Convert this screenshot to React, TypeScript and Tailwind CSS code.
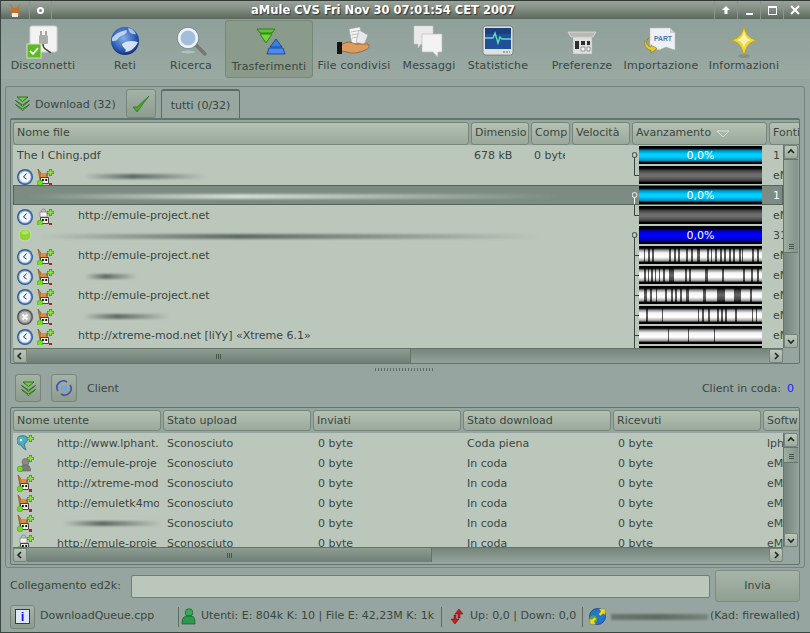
import React from 'react';

const font = { fontFamily: '"DejaVu Sans", sans-serif' };

const Clock = ({ off }: { off?: boolean }) => (
    <svg width="16" height="16" viewBox="0 0 16 16" className="shrink-0 mt-[2px]">
        <circle cx="8" cy="8" r="8" fill={off ? '#555' : '#2f5f9c'} />
        <circle cx="8" cy="8" r="6.6" fill={off ? '#8f8f8f' : '#8fb0d8'} />
        <circle cx="8" cy="8" r="5.6" fill={off ? '#bdbdbd' : '#f1f4f9'} />
        {off
            ? <path d="M5.5 5.5l5 5M10.5 5.5l-5 5" stroke="#f8f8f8" strokeWidth="2.2" />
            : <path d="M9.5 4.5L6.5 8l3 2" stroke="#2b3850" strokeWidth="1" fill="none" />}
    </svg>
);

const Badges = () => (
    <>
        <circle cx="3" cy="15" r="2.8" fill="#6fe01f" stroke="#3d8a10" strokeWidth="0.5" />
        <path d="M12 15h3v3h-3z" fill="#d0101a" />
        <path d="M13.5 1v7M10 4.5h7" stroke="#2f7d10" strokeWidth="3" />
        <path d="M13.5 1.5v6M10.5 4.5h6" stroke="#88e634" strokeWidth="1.8" />
    </>
);

const Mule = ({ lock }: { lock?: boolean }) => (
    <svg width="18" height="18" viewBox="0 0 18 18" className="shrink-0">
        {lock
            ? <>
                <path d="M3 4h7v5H3z" fill="#f0f0f0" stroke="#7a7a7a" strokeWidth="0.7" />
                <path d="M4.5 4V2.500c0-2 4-2 4 0V4" stroke="#8a8a8a" fill="none" />
            </>
            : <>
                <path d="M1 1l3 4 1 3h4l1-3 1-2-1 9H3z" fill="#c9782f" stroke="#7a4414" strokeWidth="0.6" />
                <path d="M4 5h5v4H4z" fill="#d98f48" />
            </>}
        <path d="M3.500 9.500h8v6h-8z" fill="#ece9df" stroke="#3a3a34" strokeWidth="0.9" />
        <path d="M5 12h1.800M8.300 12h1.800" stroke="#111" strokeWidth="2" />
        <Badges />
    </svg>
);

const Lphant = () => (
    <svg width="18" height="18" viewBox="0 0 18 18" className="shrink-0">
        <path d="M0 5c1-4 7-4 10-2 1 3 0 6-3 7l2 6-3-2-2-3C1 11-1 9 0 5z" fill="#4ab0c0" stroke="#15505e" strokeWidth="0.6" />
        <circle cx="4" cy="6" r="1.300" fill="#fff" />
        <path d="M13.500 1v7M10 4.500h7" stroke="#2f7d10" strokeWidth="3" />
        <path d="M13.500 1.500v6M10.500 4.500h6" stroke="#88e634" strokeWidth="1.800" />
    </svg>
);

const Guest = () => (
    <svg width="18" height="18" viewBox="0 0 18 18" className="shrink-0">
        <circle cx="8.500" cy="8" r="3.500" fill="#8a8a86" stroke="#555" strokeWidth="0.5" />
        <path d="M3 17c0-5 2-6 5.500-6s5 1 5 6z" fill="#7a7a76" stroke="#555" strokeWidth="0.5" />
        <circle cx="3" cy="15" r="2.800" fill="#6fe01f" stroke="#3d8a10" strokeWidth="0.5" />
        <path d="M13.500 1v7M10 4.500h7" stroke="#2f7d10" strokeWidth="3" />
        <path d="M13.500 1.500v6M10.500 4.500h6" stroke="#88e634" strokeWidth="1.800" />
    </svg>
);

const GreenDown = ({ size = 17 }: { size?: number }) => (
    <svg width={size} height={size} viewBox="0 0 17 17" className="shrink-0">
        <path d="M3 2h11l-5.500 4.500z" fill="#6bd13a" stroke="#1f6d12" strokeWidth="0.9" strokeLinejoin="round" />
        <path d="M1.500 5.500l7 4.500 7-4.500-7 6z" fill="#7fe04a" stroke="#1f6d12" strokeWidth="0.9" strokeLinejoin="round" />
        <path d="M1.500 9.500l7 4.500 7-4.500-7 6z" fill="#9be86a" stroke="#1f6d12" strokeWidth="0.9" strokeLinejoin="round" />
    </svg>
);

const DisconnectIcon = () => (
    <svg width="36" height="36" viewBox="3 0 36 36">
        <rect x="8" y="3" width="27" height="26" rx="2" fill="#f3f3f3" stroke="#cfcfcf" />
        <rect x="17" y="12" width="9" height="9" rx="1.500" fill="#a9aeab" />
        <path d="M19 8v4M24 8v4" stroke="#8a8a8a" strokeWidth="1.500" />
        <path d="M21 21c0 5 3 5 8 9" stroke="#444" strokeWidth="1.600" fill="none" />
        <rect x="5" y="21" width="14" height="14" fill="#5cbb22" stroke="#cfe3b8" />
        <path d="M8 28l3 3 5-6" stroke="#fff" strokeWidth="1.800" fill="none" />
    </svg>
);

const GlobeIcon = () => (
    <svg width="36" height="36" viewBox="0 0 36 36">
        <defs>
            <radialGradient id="globeFill" cx="45%" cy="40%" r="60%">
                <stop offset="0%" stopColor="#86aee8" />
                <stop offset="70%" stopColor="#2d5fb8" />
                <stop offset="100%" stopColor="#123070" />
            </radialGradient>
        </defs>
        <circle cx="18" cy="18" r="14" fill="url(#globeFill)" />
        <path d="M5 15c5-6 9-6 14-8 3 2-2 5-5 6s-3 6-9 5z" fill="#c9daf2" opacity="0.9" />
        <path d="M15 21c6-4 11-3 16-2-3 7-9 10-13 10 3-3-3-4-3-8z" fill="#e6eef9" opacity="0.9" />
        <path d="M21 5c3 0 6 2 8 6-4 1-7-1-8-6z" fill="#a8c4ec" />
    </svg>
);

const SearchIcon = () => (
    <svg width="36" height="36" viewBox="0 0 36 36">
        <ellipse cx="15" cy="29" rx="7" ry="1.500" fill="#c9d3cf" opacity="0.6" />
        <path d="M23 22l9 9" stroke="#77776f" strokeWidth="3.500" strokeLinecap="round" />
        <circle cx="15" cy="15" r="9" fill="#a3bedb" stroke="#eef2f5" strokeWidth="3" />
        <circle cx="15" cy="15" r="10.700" fill="none" stroke="#5b7690" strokeWidth="0.600" />
    </svg>
);

const TransferIcon = () => (
    <svg width="36" height="36" viewBox="0 0 36 36">
        <path d="M6 4h18l-3 4H9z" fill="#5cc72d" stroke="#1e6f12" strokeWidth="0.800" />
        <path d="M9 9h12l-6 9z" fill="#73d63f" stroke="#1e6f12" strokeWidth="0.800" />
        <path d="M25 14l-6 8h12z" fill="#3a7fe6" stroke="#123a8a" strokeWidth="0.800" />
        <path d="M18 23h14l2 6H16z" fill="#4a8bf0" stroke="#123a8a" strokeWidth="0.800" />
    </svg>
);

const ShareIcon = () => (
    <svg width="36" height="36" viewBox="0 0 36 36">
        <path d="M13 6l11-2 3 15-11 2z" fill="#f4f4f4" stroke="#999" strokeWidth="0.500" />
        <path d="M15 9l8-1.500M15.500 12l8-1.500M16 15l8-1.500" stroke="#a5a5a5" strokeWidth="0.700" />
        <path d="M23 7l9 5-4 10-8-3z" fill="#e8e8e8" stroke="#999" strokeWidth="0.500" />
        <path d="M5 22c6-4 10-3 14-1l13 0c2 2 1 5-3 6-6 3-13 4-18 2l-6-1z" fill="#dd9c5e" stroke="#8a5526" strokeWidth="0.700" />
        <rect x="1" y="19" width="5" height="12" fill="#141414" />
    </svg>
);

const MessageIcon = () => (
    <svg width="36" height="36" viewBox="0 0 36 36">
        <path d="M3 3h19v18H10l-3 4v-4H3z" fill="#e9e9e9" stroke="#c8c8c8" strokeWidth="0.500" />
        <path d="M11 11h20v18h-4l-0.500 5-4.500-5H11z" fill="#f3f3f3" stroke="#bcbcbc" strokeWidth="0.700" />
    </svg>
);

const StatsIcon = () => (
    <svg width="36" height="36" viewBox="0 0 36 36">
        <rect x="3" y="3" width="30" height="29" rx="3" fill="#dfe1df" stroke="#6a6f6c" strokeWidth="0.700" />
        <rect x="5" y="5" width="26" height="21" fill="#214f99" />
        <rect x="5" y="5" width="26" height="6" fill="#1b3f7c" />
        <path d="M5 15h8l2-5 3 10 2-6 2 2h9" stroke="#62e0b4" strokeWidth="1.400" fill="none" />
        <path d="M23 29h7" stroke="#8d8d8d" strokeWidth="1.500" strokeDasharray="2 1" />
    </svg>
);

const PrefsIcon = () => (
    <svg width="36" height="36" viewBox="0 0 36 36">
        <path d="M4 9h28l-3 5H7z" fill="#b6bab5" stroke="#eee" strokeWidth="0.600" />
        <rect x="9" y="14" width="19" height="17" fill="#dfdfdd" stroke="#aaa" strokeWidth="0.500" />
        <path d="M11 18h4v8h-4zM17 18h4v4h-4zM23 18h3v4h-3z" fill="#2e2e2e" />
        <path d="M17 24h4v4h-4zM23 24h3v4h-3z" fill="#f6f6f6" stroke="#444" strokeWidth="0.500" />
    </svg>
);

const ImportIcon = () => (
    <svg width="36" height="36" viewBox="0 0 36 36">
        <path d="M7 5h20l5 5v17l-9-3-7 3-9-3z" fill="#eef0f3" stroke="#b8b8b8" strokeWidth="0.500" />
        <path d="M27 5v5h5z" fill="#c9ccd0" />
        <text x="11" y="18" fontSize="8" fontWeight="700" fill="#4a78ae" textLength="18" lengthAdjust="spacingAndGlyphs" style={{ fontFamily: '"Liberation Sans", sans-serif' }}>PART</text>
        <path d="M6 15c-4 3-3 8 2 9v-2l6 3.500L8 30v-2.500C1 26-1 18 6 15z" fill="#e6c92e" stroke="#8a7410" strokeWidth="0.600" />
    </svg>
);

const StarIcon = () => (
    <svg width="36" height="36" viewBox="0 0 36 36">
        <ellipse cx="18" cy="33" rx="6" ry="2" fill="#6f7d77" opacity="0.500" />
        <path d="M18 3c2 9 5 13 14 14-9 2-12 6-14 16-2-10-5-14-14-16 9-1 12-5 14-14z" fill="#efd63c" stroke="#b59b12" strokeWidth="0.700" />
        <path d="M18 8c1 5 3 8 7 9-4 1-6 3-7 8-1-5-3-7-7-8 4-1 6-4 7-9z" fill="#fbf2a8" />
    </svg>
);

const tools = [
    { label: 'Disconnetti', icon: <DisconnectIcon />, box: 'w-[78px] ml-[3px]' },
    { label: 'Reti', icon: <GlobeIcon />, box: 'w-[86px]' },
    { label: 'Ricerca', icon: <SearchIcon />, box: 'w-[46px]' },
    { label: 'Trasferimenti', icon: <TransferIcon />, box: 'w-[88px] ml-[11px]', active: true },
    { label: 'File condivisi', icon: <ShareIcon />, box: 'w-[82px]' },
    { label: 'Messaggi', icon: <MessageIcon />, box: 'w-[68px]' },
    { label: 'Statistiche', icon: <StatsIcon />, box: 'w-[70px]' },
    { label: 'Preferenze', icon: <PrefsIcon />, box: 'w-[74px] ml-[12px]' },
    { label: 'Importazione', icon: <ImportIcon />, box: 'w-[76px] ml-[4px]' },
    { label: 'Informazioni', icon: <StarIcon />, box: 'w-[82px] ml-[4px]' },
];

const TitleBar = () => (
    <div className="h-[19px] shrink-0 flex items-center border-t border-[#2f3a34] bg-linear-to-b from-[#9ba39a] via-[#7f8b81] to-[#5a675d] text-white">
        <div className="w-[28px] flex justify-center">
            <svg width="14" height="15" viewBox="0 0 14 15">
                <path d="M2 0l3 5h4l3-5-2 8 2 5H2l2-5z" fill="#c4702a" />
                <path d="M4 10h6v4H4z" fill="#eee" />
            </svg>
        </div>
        <div className="w-[23px] h-full flex items-center justify-center border-x border-[#8a958b]">
            <span className="w-[7px] h-[7px] rounded-full border-2 border-white" />
        </div>
        <div className="flex-1 pt-[2px] text-center font-bold text-[11.5px] [text-shadow:1px_1px_1px_#333]">
            aMule CVS Fri Nov 30 07:01:54 CET 2007
        </div>
        <div className="flex h-full items-center mr-[4px]">
            <div className="w-[23px] h-full flex items-center justify-center border-l border-[#8a958b]">
                <svg width="10" height="10" viewBox="0 0 10 10"><path d="M5 1l4 4H6.500v4h-3V5H1z" fill="#fff" /></svg>
            </div>
            <div className="w-[23px] h-full flex items-end justify-center pb-[4px] border-l border-[#8a958b]">
                <span className="w-[7px] h-[2px] bg-white" />
            </div>
            <div className="w-[23px] h-full flex items-center justify-center border-l border-[#8a958b]">
                <span className="w-[9px] h-[9px] border border-white border-t-2" />
            </div>
            <div className="w-[23px] h-full flex items-center justify-center border-l border-[#8a958b]">
                <svg width="10" height="10" viewBox="0 0 10 10"><path d="M1 1l8 8M9 1l-8 8" stroke="#fff" strokeWidth="2" /></svg>
            </div>
        </div>
    </div>
);

const Toolbar = () => (
    <div className="h-[60px] shrink-0 flex bg-linear-to-b from-[#8f9f99] to-[#9aaaa3]">
        {tools.map(t => (
            <div
                key={t.label}
                className={`${t.box} flex flex-col items-center pt-[4px] whitespace-nowrap ${t.active ? 'bg-[#8a9b8c] border border-[#76877b] rounded-[3px] my-[1px] pt-[4px]' : ''}`}
            >
                <div className="h-[36px] flex items-center justify-center">{t.icon}</div>
                <span className={`${t.active ? '-mt-[2px]' : '-mt-[1px]'} text-[11px] tracking-[0.2px] text-[#3a4640]`}>{t.label}</span>
            </div>
        ))}
    </div>
);

// dark stripes of the chunk bars, in bar pixels: [start, width]
const stripes: [number, number][][] = [
    [[5, 1], [9, 2], [13, 2], [30, 2], [35, 2], [39, 2], [47, 2], [52, 2], [58, 3], [68, 2], [72, 1], [76, 2], [81, 2], [85, 2], [90, 2], [94, 2], [100, 2], [103, 1], [113, 2], [118, 2]],
    [[5, 2], [9, 1], [12, 2], [16, 1], [20, 1], [24, 2], [30, 2], [32, 3], [46, 2], [50, 2], [66, 3], [83, 2], [104, 2], [112, 2], [118, 2]],
    [[5, 3], [11, 2], [17, 1], [26, 2], [32, 2], [36, 2], [41, 2], [47, 3], [64, 3], [78, 8], [95, 7], [111, 2]],
    [[7, 2], [23, 1], [59, 1], [63, 2], [69, 2], [78, 2], [82, 2], [86, 2], [96, 2], [113, 1], [117, 1]],
    [[29, 1], [49, 1], [75, 1]],
];

const ProgressBar = ({ kind, stripe }: { kind: 'cyan' | 'blue' | 'gray' | 'chunks'; stripe?: number }) => {
    if (kind === 'chunks') {
        const marks = stripes[stripe ?? 0];
        return (
            <div className="relative w-[123px] h-[18px] shrink-0 bg-[linear-gradient(#000_12%,#999_24%,#f4f4f4_38%,#fff_62%,#aaa_80%,#000_92%)] overflow-hidden">
                {marks.map(([left, width]) => (
                    <span
                        key={left}
                        className="absolute inset-y-0 bg-[linear-gradient(#000_12%,#444_30%,#666_50%,#444_75%,#000_92%)]"
                        style={{ left, width }}
                    />
                ))}
            </div>
        );
    }
    const fill = kind === 'cyan'
        ? 'bg-[linear-gradient(#000_12%,#0090c0_26%,#00d0ff_45%,#00d0ff_60%,#0090c0_80%,#000_92%)]'
        : kind === 'blue'
            ? 'bg-[linear-gradient(#000_12%,#0000a8_26%,#0000ff_45%,#0000ff_60%,#0000a8_80%,#000_92%)]'
            : 'bg-[linear-gradient(#000_12%,#444_26%,#6c6c6c_45%,#6c6c6c_60%,#444_80%,#000_92%)]';
    return (
        <div className={`w-[123px] h-[18px] pt-[2px] shrink-0 flex items-center justify-center ${fill} text-[11px] text-white`}>
            {kind !== 'gray' && '0,0%'}
        </div>
    );
};

const TreeMark = ({ type, light }: { type: 'root' | 'open' | 'mid' | 'child'; light?: boolean }) => {
    const c = light ? '#f2f2f2' : '#39443f';
    return (
        <svg width="7" height="20" viewBox="0 0 7 20" className="shrink-0">
            {(type === 'root' || type === 'open') && <path d="M2.500 10v10" stroke={c} fill="none" />}
            {(type === 'root' || type === 'open') && <circle cx="2.500" cy="10" r="2.500" fill={light ? '#7c8c82' : '#bcc7bc'} stroke={c} />}
            {type === 'child' && <path d="M2.500 0v10.500h4.500" stroke={c} fill="none" />}
            {type === 'mid' && <path d="M2.500 0v20M2.500 10.500h4.500" stroke={c} fill="none" />}
        </svg>
    );
};

const Smear = ({ className, light }: { className: string; light?: boolean }) => (
    <div
        className={`${className} h-[5px] blur-[1.2px] rounded-full bg-linear-to-r from-transparent from-2% ${light ? 'via-[#d5dcd5]' : 'via-[#5e6b64]'} via-40% to-transparent to-98%`}
    />
);

const ScrollBtn = ({ dir }: { dir: 'up' | 'down' | 'left' | 'right' }) => {
    const d = { up: 'M2 6l3-3 3 3', down: 'M2 4l3 3 3-3', left: 'M6 2L3 5l3 3', right: 'M4 2l3 3-3 3' }[dir];
    return (
        <div className="w-[14px] h-[14px] shrink-0 flex items-center justify-center bg-linear-to-b from-[#bcc7bb] to-[#9eac9f] border border-[#75857b] rounded-[2px]">
            <svg width="10" height="10" viewBox="0 0 10 10"><path d={d} stroke="#222" strokeWidth="1.600" fill="none" /></svg>
        </div>
    );
};

const HScroll = ({ thumb }: { thumb: string }) => (
    <div className="h-[15px] shrink-0 w-[770px] flex bg-linear-to-b from-[#76867c] to-[#93a29a] border-t border-[#64746a] items-center">
        <ScrollBtn dir="left" />
        <div className={`${thumb} h-full flex items-center justify-center gap-[1px] bg-linear-to-b from-[#8d9d92] to-[#6f7f75] border-r border-[#64746a]`}>
            <span className="w-[1px] h-[5px] bg-[#46544c]" />
            <span className="w-[1px] h-[5px] bg-[#46544c]" />
            <span className="w-[1px] h-[5px] bg-[#46544c]" />
        </div>
        <div className="flex-1" />
        <ScrollBtn dir="right" />
    </div>
);

const VScroll = ({ thumb }: { thumb: string }) => (
    <div className="w-[15px] shrink-0 flex flex-col bg-linear-to-r from-[#76867c] to-[#93a29a] border-l border-[#64746a]">
        <ScrollBtn dir="up" />
        <div className={`${thumb} shrink-0 flex flex-col items-center justify-end gap-[1px] pb-[3px] bg-linear-to-r from-[#9fada2] to-[#84948a] border-y border-[#64746a]`}>
            <span className="w-[5px] h-[1px] bg-[#46544c]" />
            <span className="w-[5px] h-[1px] bg-[#46544c]" />
            <span className="w-[5px] h-[1px] bg-[#46544c]" />
        </div>
        <div className="flex-1" />
        <ScrollBtn dir="down" />
    </div>
);

const Head = ({ w, children, sort, low }: { w: string; children: React.ReactNode; sort?: boolean; low?: boolean }) => (
    <div className={`${w} ${low ? 'pt-[2px]' : ''} shrink-0 h-full px-[3px] flex items-center gap-[5px] overflow-hidden whitespace-nowrap rounded-[3px] border border-[#76867b] bg-linear-to-b from-[#b5c1b2] to-[#9aa99c] text-[11px] text-[#3a4640]`}>
        {children}
        {sort && <svg width="14" height="8" viewBox="0 0 14 8"><path d="M1 1h12L7 7z" fill="none" stroke="#d7ddd6" /></svg>}
    </div>
);

type DlRow = {
    icon?: 'clock' | 'dot' | 'off';
    lock?: boolean;
    text?: string;
    smear?: string;
    light?: boolean;
    bar: React.ReactNode;
    tree: 'root' | 'child' | 'open' | 'mid';
    src: string;
    selected?: boolean;
    first?: boolean;
};

const downloads: DlRow[] = [
    { first: true, text: 'The I Ching.pdf', bar: <ProgressBar kind="cyan" />, tree: 'root', src: '1' },
    { icon: 'clock', smear: 'ml-[26px] w-[128px]', bar: <ProgressBar kind="gray" />, tree: 'child', src: 'eM' },
    { smear: 'ml-[-2px] w-[556px]', light: true, selected: true, bar: <ProgressBar kind="cyan" />, tree: 'root', src: '1' },
    { icon: 'clock', lock: true, text: 'http://emule-project.net', bar: <ProgressBar kind="gray" />, tree: 'child', src: 'eM' },
    { icon: 'dot', smear: 'ml-[-3px] w-[520px]', bar: <ProgressBar kind="blue" />, tree: 'open', src: '31' },
    { icon: 'clock', text: 'http://emule-project.net', bar: <ProgressBar kind="chunks" stripe={0} />, tree: 'mid', src: 'eM' },
    { icon: 'clock', smear: 'ml-[29px] w-[54px]', bar: <ProgressBar kind="chunks" stripe={1} />, tree: 'mid', src: 'eM' },
    { icon: 'clock', text: 'http://emule-project.net', bar: <ProgressBar kind="chunks" stripe={2} />, tree: 'mid', src: 'eM' },
    { icon: 'off', smear: 'ml-[26px] w-[90px]', bar: <ProgressBar kind="chunks" stripe={3} />, tree: 'mid', src: 'eM' },
    { icon: 'clock', text: 'http://xtreme-mod.net [liYy] «Xtreme 6.1»', bar: <ProgressBar kind="chunks" stripe={4} />, tree: 'mid', src: 'eM' },
    { bar: <ProgressBar kind="gray" />, tree: 'mid', src: '' },
];

const DownloadRow = ({ row }: { row: DlRow }) => (
    <div className={`h-[20px] shrink-0 flex items-center whitespace-nowrap text-[11px] ${row.selected ? 'bg-[#7c8c82] outline outline-[#56645b] -outline-offset-1 text-white' : 'text-[#3a4640]'}`}>
        <div className="w-[619px] shrink-0 flex items-center pl-[4px] pt-[2px] overflow-hidden h-full">
            {row.first ? (
                <>
                    <span className="w-[457px] shrink-0">{row.text}</span>
                    <span className="w-[60px] shrink-0">678 kB</span>
                    <span className="w-[31px] shrink-0 overflow-hidden">0 byte</span>
                </>
            ) : (
                <>
                    {row.icon === 'dot' ? (
                        <svg width="16" height="16" viewBox="0 0 16 16" className="shrink-0 -mt-[2px]">
                            <circle cx="8" cy="8" r="6" fill="#8ed52c" stroke="#c9d9b8" strokeWidth="1" />
                            <ellipse cx="8" cy="5.500" rx="3.500" ry="2" fill="#c4ee7e" opacity="0.6" />
                        </svg>
                    ) : row.icon ? <Clock off={row.icon === 'off'} /> : null}
                    {row.icon && row.icon !== 'dot' && <div className="ml-[4px] mt-[2px]"><Mule lock={row.lock} /></div>}
                    {row.text && <span className="ml-[23px]">{row.text}</span>}
                    {row.smear && <Smear className={row.smear} light={row.light} />}
                </>
            )}
        </div>
        <div className="w-[137px] shrink-0 h-full flex items-center">
            <div className="flex items-center"><TreeMark type={row.tree} light={row.selected} />{row.bar}</div>
        </div>
        <div className="w-[14px] shrink-0 pl-[4px] pt-[2px] overflow-hidden">{row.src}</div>
    </div>
);

const clients = [
    { icon: <Lphant />, name: 'http://www.lphant.', down: 'Coda piena', soft: 'lphant' },
    { icon: <Guest />, name: 'http://emule-proje', down: 'In coda', soft: 'eMule' },
    { icon: <Mule />, name: 'http://xtreme-mod', down: 'In coda', soft: 'eMule' },
    { icon: <Mule />, name: 'http://emuletk4mod', down: 'In coda', soft: 'eMule' },
    { icon: <Mule />, name: '', down: 'In coda', soft: 'eMule' },
    { icon: <Mule lock />, name: 'http://emule-proje', down: 'In coda', soft: 'eMule' },
];

const SquareBtn = ({ className, children }: { className: string; children: React.ReactNode }) => (
    <div className={`${className} shrink-0 flex items-center justify-center rounded-[3px] border border-[#76867b] bg-linear-to-b from-[#a5b3a6] to-[#8c9c8f]`}>
        {children}
    </div>
);

const Divider = () => <div className="w-[1px] h-[20px] bg-[#5d6b63] shrink-0" />;

export default function App() {
    return (
        <div style={font} className="w-[810px] h-[633px] overflow-hidden flex flex-col bg-[#96a59f] border-l border-b border-[#3a4640]">
            <TitleBar />
            <Toolbar />

            <div className="mt-[7px] ml-[4px] w-[800px] h-[482px] shrink-0 border border-[#75857b] rounded-[3px] px-[4px] pt-[2px] flex flex-col">
                <div className="h-[29px] shrink-0 flex items-center">
                    <div className="ml-[4px] w-[112px] flex items-center gap-[4px] text-[11px] text-[#3a4640]">
                        <GreenDown />
                        <span className="pt-[3px]">Download (32)</span>
                    </div>
                    <SquareBtn className="w-[30px] h-[29px]">
                        <svg width="20" height="20" viewBox="0 0 20 20"><path d="M2 13l4 5L18 2 6 13z" fill="#3fae22" stroke="#17590f" strokeWidth="0.500" /></svg>
                    </SquareBtn>
                    <div className="ml-[5px] w-[79px] h-[30px] pt-[3px] flex items-center justify-center border border-b-0 border-t-2 border-[#5d6b63] rounded-t-[3px] bg-[#98a79f] text-[11px] text-[#3a4640]">
                        tutti (0/32)
                    </div>
                </div>

                <div className="w-[790px] h-[246px] shrink-0 border border-t-2 border-[#64746a] rounded-[2px] pl-[2px] pt-[2px] flex flex-col bg-[#96a59f]">
                    <div className="h-[23px] shrink-0 flex gap-[2px] overflow-hidden">
                        <Head w="w-[456px]">Nome file</Head>
                        <Head w="w-[58px]">Dimensio</Head>
                        <Head w="w-[39px]">Comp</Head>
                        <Head w="w-[58px]">Velocità</Head>
                        <Head w="w-[135px]" sort>Avanzamento</Head>
                        <Head w="w-[40px]">Fonti</Head>
                    </div>
                    <div className="h-[203px] shrink-0 flex bg-[#bcc7bc] w-[785px]">
                        <div className="w-[770px] overflow-hidden flex flex-col">
                            {downloads.map((r, i) => <DownloadRow key={i} row={r} />)}
                        </div>
                        <VScroll thumb="h-[94px]" />
                    </div>
                    <HScroll thumb="w-[384px]" />
                </div>

                <div className="h-[10px] shrink-0 flex items-center justify-center">
                    <div className="w-[60px] h-[3px] bg-[repeating-linear-gradient(90deg,#5d6b63_0_1px,transparent_1px_3px)]" />
                </div>

                <div className="h-[28px] shrink-0 flex items-center pl-[5px] text-[11px] text-[#3a4640]">
                    <SquareBtn className="w-[26px] h-[28px]"><GreenDown /></SquareBtn>
                    <SquareBtn className="w-[26px] h-[28px] ml-[10px]">
                        <svg width="18" height="18" viewBox="0 0 18 18">
                            <path d="M3 12A6.500 6.500 0 0 1 12 3M15 6a6.500 6.500 0 0 1-9 9" stroke="#3f51b5" strokeWidth="1.600" fill="none" />
                            <ellipse cx="9" cy="9" rx="3.500" ry="2.500" fill="#6ea4e8" />
                        </svg>
                    </SquareBtn>
                    <span className="ml-[10px] pt-[2px]">Client</span>
                    <span className="ml-auto mr-[6px] pt-[2px]">Client in coda:</span>
                    <span className="mr-[6px] pt-[2px] text-[#2020ff]">0</span>
                </div>

                <div className="mt-[5px] w-[790px] h-[158px] shrink-0 border border-[#64746a] rounded-[2px] pl-[2px] pt-[2px] flex flex-col">
                    <div className="h-[21px] shrink-0 flex gap-[2px] overflow-hidden">
                        <Head low w="w-[148px]">Nome utente</Head>
                        <Head low w="w-[148px]">Stato upload</Head>
                        <Head low w="w-[148px]">Inviati</Head>
                        <Head low w="w-[148px]">Stato download</Head>
                        <Head low w="w-[148px]">Ricevuti</Head>
                        <Head low w="w-[60px]">Softw</Head>
                    </div>
                    <div className="mt-[2px] h-[114px] shrink-0 flex bg-[#bcc7bc] w-[785px]">
                        <div className="w-[770px] overflow-hidden flex flex-col">
                            {clients.map((c, i) => (
                                <div key={i} className="h-[20px] shrink-0 flex items-center whitespace-nowrap text-[11px] text-[#3a4640]">
                                    <div className="w-[151px] shrink-0 flex items-center pl-[4px] overflow-hidden">
                                        {c.icon}
                                        {c.name
                                            ? <span className="ml-[22px] pt-[2px] w-[102px] overflow-hidden shrink-0">{c.name}</span>
                                            : <Smear className="ml-[26px] w-[106px]" />}
                                    </div>
                                    <span className="w-[151px] shrink-0 pl-[3px] pt-[2px]">Sconosciuto</span>
                                    <span className="w-[149px] shrink-0 pl-[3px] pt-[2px]">0 byte</span>
                                    <span className="w-[151px] shrink-0 pl-[3px] pt-[2px]">{c.down}</span>
                                    <span className="w-[149px] shrink-0 pl-[3px] pt-[2px]">0 byte</span>
                                    <span className="w-[19px] shrink-0 pl-[3px] pt-[2px] overflow-hidden">{c.soft}</span>
                                </div>
                            ))}
                        </div>
                        <VScroll thumb="h-[16px]" />
                    </div>
                    <HScroll thumb="w-[405px]" />
                </div>
            </div>

            <div className="mt-[2px] h-[32px] shrink-0 flex items-center pl-[9px] text-[11px] text-[#3a4640]">
                <span className="w-[121px] shrink-0">Collegamento ed2k:</span>
                <div className="w-[579px] h-[23px] shrink-0 bg-[#bcc7bc] border border-[#6e7e74] rounded-[2px]" />
                <div className="ml-[5px] w-[85px] h-[32px] shrink-0 flex items-center justify-center rounded-[3px] border border-[#7d8d81] bg-linear-to-b from-[#a7b5a8] to-[#8f9f92]">Invia</div>
            </div>

            <div className="mt-[1px] h-[27px] shrink-0 flex items-center pl-[9px] text-[11px] text-[#3a4640] whitespace-nowrap">
                <SquareBtn className="w-[25px] h-[24px]">
                    <span className="w-[15px] h-[15px] bg-[#dfe6fa] border border-[#2230a8] flex items-center justify-center text-[#1414e0] font-bold text-[13px]" style={{ fontFamily: '"Liberation Sans", sans-serif' }}>i</span>
                </SquareBtn>
                <span className="ml-[5px] w-[138px] shrink-0">DownloadQueue.cpp</span>
                <Divider />
                <svg width="15" height="17" viewBox="0 0 15 17" className="ml-[2px] shrink-0">
                    <circle cx="8" cy="4.500" r="3.800" fill="#35ad55" stroke="#0e4a22" strokeWidth="0.600" />
                    <path d="M1 16c0-7 2-8 7-8s6 1 6 8z" fill="#2c9a4a" stroke="#0e4a22" strokeWidth="0.600" />
                </svg>
                <span className="ml-[5px] w-[240px] shrink-0">Utenti: E: 804k K: 10 | File E: 42,23M K: 1k</span>
                <Divider />
                <svg width="14" height="17" viewBox="0 0 14 17" className="ml-[8px] shrink-0">
                    <path d="M9 1l4 5H10v4H8V6H5z" fill="#d01818" stroke="#6a0c0c" strokeWidth="0.500" />
                    <path d="M5 16L1 11h3V7h2v4h3z" fill="#d01818" stroke="#6a0c0c" strokeWidth="0.500" />
                </svg>
                <span className="ml-[6px] w-[112px] shrink-0">Up: 0,0 | Down: 0,0</span>
                <Divider />
                <svg width="17" height="17" viewBox="0 0 17 17" className="ml-[6px] shrink-0">
                    <circle cx="8.500" cy="8.500" r="8" fill="#2277cc" stroke="#0e3a70" strokeWidth="0.700" />
                    <path d="M1 9c3-3 6-2 7 1s-1 5-3 5z" fill="#4aa84a" />
                    <path d="M10 1h6v6l-2-1.500-2.500 2.500-2-2 2.500-2.500z" fill="#f0dc30" stroke="#7a6a08" strokeWidth="0.400" />
                    <path d="M7 16H1v-6l2 1.500L5.500 9l2 2L5 13.500z" fill="#f0dc30" stroke="#7a6a08" strokeWidth="0.400" />
                </svg>
                <div className="ml-[5px] w-[97px] h-[6px] shrink-0 blur-[1px] bg-linear-to-r from-[#6a7770] via-[#5e6b64] to-[#77857d]" />
                <span className="ml-[2px]">(Kad: firewalled)</span>
            </div>
        </div>
    );
}
